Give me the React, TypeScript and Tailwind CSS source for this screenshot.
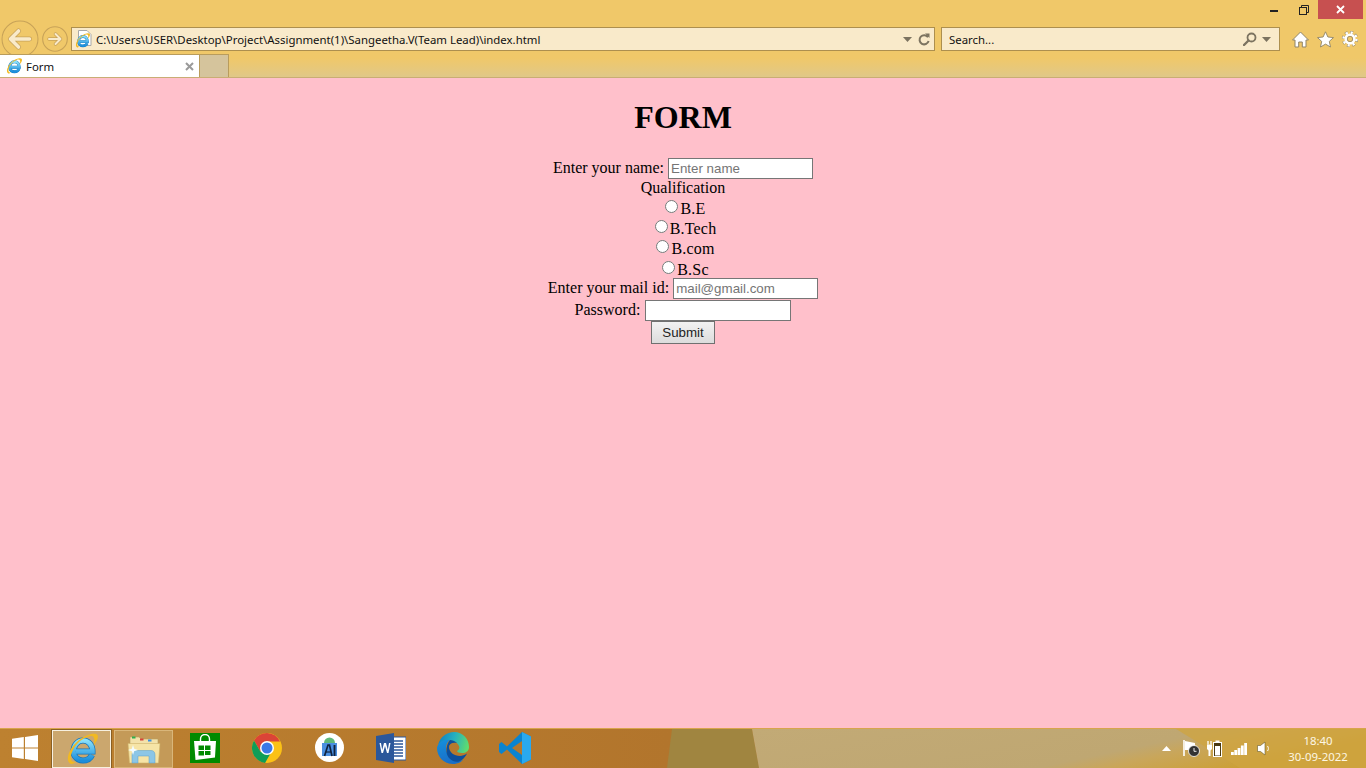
import React from "react";

const IeIcon = ({ size, x, y }: { size: number; x?: number; y?: number }) => (
  <svg width={size} height={size} x={x} y={y} viewBox="0 0 32 32">
    <defs>
      <linearGradient id={`ieb${size}`} x1="0" y1="0" x2="0" y2="1">
        <stop offset="0" stopColor="#8be0fa" />
        <stop offset="1" stopColor="#1b8edb" />
      </linearGradient>
    </defs>
    <path d="M10 18.500H26.500C26.500 12 22.500 7.500 17 7.500C11.500 7.500 7.500 12.500 7.500 18.500C7.500 24 12 27.500 17 27.500C21 27.500 24.500 25.500 26 22" fill="none" stroke="#1476bd" strokeWidth="6" />
    <path d="M10 18.500H26.500C26.500 12 22.500 7.500 17 7.500C11.500 7.500 7.500 12.500 7.500 18.500C7.500 24 12 27.500 17 27.500C21 27.500 24.500 25.500 26 22" fill="none" stroke={`url(#ieb${size})`} strokeWidth="4.600" />
    <path d="M4 30.500C-1 27 3 15 13 7C20 1.500 29 -1 31.500 2C33 4.500 30.500 9 27.500 12.500C28.500 8.500 29 5 27 3.500C23 1.500 13 7 8 15C4.500 21 3.500 26.500 6.500 28.500C8 29.200 9 29 10 28.500C8 30.800 5.500 31.500 4 30.500Z" fill="#f2b921" />
  </svg>
);

const NavCircle = ({ d, big }: { d: string; big?: boolean }) => (
  <svg width={big ? 38 : 26} height={big ? 38 : 26} viewBox="0 0 26 26">
    <circle cx="13" cy="13" r="12.300" fill="none" stroke="#c7a258" strokeWidth={big ? 0.7 : 1.1} />
    <path d={d} fill="none" stroke="#c7a258" strokeWidth={big ? 3.400 : 3.400} strokeLinecap="round" strokeLinejoin="round" />
    <path d={d} fill="none" stroke="#f9eaca" strokeWidth={big ? 2.400 : 2} strokeLinecap="round" strokeLinejoin="round" />
  </svg>
);

const SmallCaret = () => (
  <svg width="9" height="5" viewBox="0 0 9 5"><path d="M0 0h9L4.500 5z" fill="#7c7360" /></svg>
);

const AddressBar = () => (
  <div className="flex h-[24px] w-[864px] items-center border border-[#ad8f4e] bg-[#f9eaca] pr-[4px]">
    <svg width="17" height="18" viewBox="0 0 17 18" className="ml-[3px] shrink-0">
      <path d="M3.500 0.500h8.500l4 4v11h-12.500z" fill="#fff" stroke="#a8a8a8" />
      <IeIcon size={15} x={0} y={3} />
    </svg>
    <span className="ml-[4px] whitespace-nowrap pt-[2px] text-[11.400px] text-[#111]">
      C:\Users\USER\Desktop\Project\Assignment(1)\Sangeetha.V(Team Lead)\index.html
    </span>
    <div className="ml-auto flex items-center gap-[6px]">
      <SmallCaret />
      <svg width="12" height="13" viewBox="0 0 12 13">
        <path d="M10 4.200A4.600 4.600 0 1 0 10.600 8" fill="none" stroke="#7c7360" strokeWidth="2" />
        <path d="M7 0.500h4.500V5z" fill="#7c7360" />
      </svg>
    </div>
  </div>
);

const SearchBar = () => (
  <div className="ml-[6px] flex h-[24px] w-[339px] items-center border border-[#ad8f4e] bg-[#f9eaca] pl-[7px] pr-[8px]">
    <span className="pt-[2px] text-[11.400px] text-[#111]">Search...</span>
    <div className="ml-auto flex items-center gap-[5px]">
      <svg width="14" height="14" viewBox="0 0 14 14">
        <circle cx="8.500" cy="5.500" r="4" fill="none" stroke="#7c7360" strokeWidth="1.800" />
        <path d="M5.500 8.500L1 13" stroke="#7c7360" strokeWidth="2.400" strokeLinecap="round" />
      </svg>
      <SmallCaret />
    </div>
  </div>
);

const ChromeIcons = () => (
  <div className="ml-auto flex items-center gap-[8px] pr-[8px]">
    <svg width="17" height="17" viewBox="0 0 17 17">
      <path d="M8.500 1L16.500 9h-2.500V16H10.300v-5H6.700v5H3V9H0.500z" fill="#fff" stroke="#8f8468" strokeWidth="1" strokeLinejoin="round" />
    </svg>
    <svg width="17" height="17" viewBox="0 0 17 17">
      <path d="M8.500 0.800l2.400 5.200 5.600.6-4.200 3.800 1.200 5.600-5-2.900-5 2.900 1.200-5.600L0.500 6.600l5.600-.6z" fill="#fff" stroke="#8f8468" strokeWidth="0.900" strokeLinejoin="round" />
    </svg>
    <svg width="16" height="16" viewBox="0 0 16 16">
      <circle cx="8" cy="8" r="6.700" fill="none" stroke="#8f8468" strokeWidth="3" strokeDasharray="2.800 2.460" />
      <circle cx="8" cy="8" r="6.500" fill="none" stroke="#fff" strokeWidth="2.400" strokeDasharray="2.200 2.880" />
      <circle cx="8" cy="8" r="4.300" fill="none" stroke="#fff" strokeWidth="2.600" />
      <circle cx="8" cy="8" r="2.700" fill="none" stroke="#8f8468" strokeWidth="0.800" />
    </svg>
  </div>
);

const BrowserChrome = () => (
  <div className="h-[78px] border-b border-[#c9ad74] bg-[linear-gradient(#f0c869_0,#f0c869_58px,#e0c888_77px)]">
    <div className="flex h-[27px] items-start justify-end pr-[3px]">
      <div className="mb-[6px] mr-[21px] mt-[10px] h-[2px] w-[8px] bg-[#222]" />
      <svg width="10" height="10" viewBox="0 0 10 10" className="mr-[9px] mt-[5px]">
        <rect x="0.500" y="2.500" width="7" height="7" fill="none" stroke="#222" />
        <path d="M2.500 2.500V0.500H9.500V7.500H7.500" fill="none" stroke="#222" />
      </svg>
      <div className="flex h-[19px] w-[45px] items-center justify-center bg-[#c75050]">
        <svg width="9" height="9" viewBox="0 0 9 9">
          <path d="M1 1L8 8M8 1L1 8" stroke="#fff" strokeWidth="1.800" />
        </svg>
      </div>
    </div>
    <div className="flex h-[24px] items-center">
      <div className="ml-[1px] flex w-[70px] items-center">
        <NavCircle big d="M19.500 13H7.500M12 7.500L6.500 13L12 18.500" />
        <span className="ml-[3px]">
          <NavCircle d="M7 13H18M13.500 8L18.500 13L13.500 18" />
        </span>
      </div>
      <AddressBar />
      <SearchBar />
      <ChromeIcons />
    </div>
    <div className="mt-[3px] flex h-[23px] items-stretch">
      <div className="flex w-[200px] items-center border-r border-t border-[#b99c5c] bg-white pl-[6px] pr-[5px]">
        <IeIcon size={16} />
        <span className="ml-[4px] pt-[2px] text-[11.400px] text-[#111]">Form</span>
        <svg width="9" height="9" viewBox="0 0 9 9" className="ml-auto">
          <path d="M1 1L8 8M8 1L1 8" stroke="#9a9a9a" strokeWidth="2" />
        </svg>
      </div>
      <div className="w-[29px] border-r border-t border-[#b99c5c] bg-[#d5c49c]" />
    </div>
  </div>
);

const RadioRow = ({ label }: { label: string }) => (
  <label className="ml-[5px] flex h-[20px] items-center justify-center pt-[2px] tracking-[0.2px]">
    <input type="radio" name="qualification" className="mb-[5px] mr-[2px] h-[13px] w-[13px]" />
    {label}
  </label>
);

const textInput =
  "h-[21px] border border-[#767676] bg-white px-[2px] font-['Liberation_Sans',Arial,sans-serif] text-[13.330px] text-black outline-none placeholder:text-[#757575]";

const Form = () => (
  <main className="flex-1 bg-[#ffc0cb] font-['Liberation_Serif','Times_New_Roman',serif] text-[16px] text-black">
    <h1 className="mt-[21px] h-[37px] text-center text-[32px] font-bold leading-[37px]">FORM</h1>
    <form className="mt-[22px] flex flex-col">
      <label className="flex h-[20px] items-center justify-center gap-[4px]">
        Enter your name:
        <input type="text" placeholder="Enter name" className={`${textInput} w-[145px]`} />
      </label>
      <div className="h-[20px] text-center leading-[20px]">Qualification</div>
      <RadioRow label="B.E" />
      <RadioRow label="B.Tech" />
      <RadioRow label="B.com" />
      <div className="pt-px">
        <RadioRow label="B.Sc" />
      </div>
      <label className="-mt-px flex h-[21px] items-center justify-center gap-[4px]">
        <span className="mb-[2px]">Enter your mail id:</span>
        <input type="text" placeholder="mail@gmail.com" className={`${textInput} w-[145px]`} />
      </label>
      <label className="mt-[1px] flex h-[21px] items-center justify-center gap-[5px]">
        <span className="mb-[2px]">Password:</span>
        <input type="password" className={`${textInput} w-[146px]`} />
      </label>
      <div className="flex justify-center">
        <button
          type="button"
          className="h-[23px] w-[64px] border border-[#707070] bg-[linear-gradient(#f2f2f2,#dcdcdc)] font-['Liberation_Sans',Arial,sans-serif] text-[13.330px] leading-none text-[#222]"
        >
          Submit
        </button>
      </div>
    </form>
  </main>
);

const TaskbarWallpaper = () => (
  <svg className="absolute inset-0 h-full w-full" viewBox="0 0 1366 40" preserveAspectRatio="none">
    <defs>
      <linearGradient id="tb" x1="0" x2="1" y1="0" y2="0">
        <stop offset="0" stopColor="#bd8130" />
        <stop offset="0.49" stopColor="#b2752c" />
        <stop offset="1" stopColor="#b2752c" />
      </linearGradient>
      <linearGradient id="tbr" x1="0" x2="1" y1="0" y2="0.300">
        <stop offset="0" stopColor="#c2aa76" />
        <stop offset="0.7" stopColor="#bfa772" />
        <stop offset="0.8" stopColor="#c9a65a" />
        <stop offset="1" stopColor="#cca036" />
      </linearGradient>
    </defs>
    <rect width="1366" height="40" fill="url(#tb)" />
    <path d="M672 0H752L759 40H667Z" fill="#a08540" />
    <path d="M752 0H1366V40H759Z" fill="url(#tbr)" />
    <path d="M1176 0H1366V40H1240Z" fill="#cfa440" opacity="0.750" />
  </svg>
);

const WindowsLogo = () => (
  <svg width="26" height="26" viewBox="0 0 26 26">
    <path d="M0 3.800L11.800 2.100V12.400H0ZM13 1.900L26 0V12.400H13ZM0 13.600H11.800V23.900L0 22.200ZM13 13.600H26V26L13 24.100Z" fill="#fff" />
  </svg>
);

const FolderIcon = () => (
  <svg width="34" height="30" viewBox="0 0 34 30">
    <path d="M3 3h9l2 2h17v8H3z" fill="#f3e2aa" stroke="#b9a060" strokeWidth="0.600" />
    <rect x="5" y="2.500" width="3.500" height="2" fill="#2fae4e" />
    <rect x="13" y="4.500" width="3.500" height="2" fill="#d8443a" />
    <rect x="21" y="5.500" width="3.500" height="2" fill="#3b8fe0" />
    <path d="M1 9.500h32l-1.500 19.500H2.500z" fill="#f6e4a6" stroke="#cdb26a" strokeWidth="0.600" />
    <path d="M5 29v-8c0-3 1.500-4.500 4-4.500h15c2.500 0 4 1.500 4 4.500v8h-6v-7h-11v7z" fill="#8cc6e6" stroke="#5b9fc8" strokeWidth="0.500" />
    <path d="M6 11l1.200 3.800 3.800 1.200-3.800 1.200L6 21l-1.200-3.800L1 16l3.800-1.200z" fill="#f3fcff" />
  </svg>
);

const StoreIcon = () => (
  <div className="flex h-[30px] w-[30px] items-center justify-center bg-[#008a00]">
    <svg width="24" height="27" viewBox="0 0 24 27">
      <path d="M7.500 7V5a4.500 4.500 0 0 1 9 0V7" fill="none" stroke="#fff" strokeWidth="1.400" />
      <path d="M1 7H23L22 23.500L2.500 26Z" fill="#fff" />
      <path d="M5.500 11.500h5.500v4.500H5.500zM12 11.500h5.500v4.500H12zM5.500 17h5.500v4.500H5.500zM12 17h5.500v4H12z" fill="#008a00" />
    </svg>
  </div>
);

const ChromeLogo = () => (
  <svg width="30" height="30" viewBox="0 0 30 30">
    <circle cx="15" cy="15" r="15" fill="#fbc116" />
    <path d="M15 0A15 15 0 0 0 2 7.500L8.500 18.800 15 8.500H28A15 15 0 0 0 15 0Z" fill="#db4437" />
    <path d="M2 7.500A15 15 0 0 0 13 29.900L19.500 18.800H8.500Z" fill="#0f9d58" />
    <circle cx="15" cy="15" r="7" fill="#fff" />
    <circle cx="15" cy="15" r="5.500" fill="#3b78e7" />
  </svg>
);

const StudioIcon = () => (
  <svg width="29" height="29" viewBox="0 0 29 29">
    <circle cx="14.500" cy="14.500" r="14.500" fill="#fff" />
    <path d="M9 10a5.500 5.500 0 0 1 11 0z" fill="#5fb87a" />
    <path d="M7 10H22V23H7z" fill="#4a8fe0" />
    <path d="M9.500 23L13 12H14.500L17 23" fill="none" stroke="#10233f" strokeWidth="1.700" />
    <path d="M19.500 12V23" stroke="#10233f" strokeWidth="1.900" />
    <path d="M11 19H16" stroke="#10233f" strokeWidth="1.200" />
  </svg>
);

const WordIcon = () => (
  <svg width="30" height="30" viewBox="0 0 30 30">
    <path d="M14 4H30V27H14Z" fill="#fff" stroke="#2b579a" />
    <path d="M17 8H27M17 11H27M17 14H27M17 17H27M17 20H27M17 23H27" stroke="#2b579a" strokeWidth="1.300" />
    <path d="M0 3L18 0V30L0 27Z" fill="#2b579a" />
    <path d="M3.500 10L5.500 20H7L9 13L11 20H12.500L14.500 10H13L11.800 17L10 10H8L6.200 17L5 10Z" fill="#fff" />
  </svg>
);

const EdgeIcon = () => (
  <svg width="32" height="32" viewBox="0 0 32 32">
    <defs>
      <linearGradient id="edgeTop" x1="0" y1="0.300" x2="1" y2="0.500">
        <stop offset="0" stopColor="#0f7fc4" />
        <stop offset="0.5" stopColor="#25b0c0" />
        <stop offset="1" stopColor="#5fdc6e" />
      </linearGradient>
      <linearGradient id="edgeLeft" x1="0" y1="0" x2="0.300" y2="1">
        <stop offset="0" stopColor="#1490dc" />
        <stop offset="1" stopColor="#1a6fc8" />
      </linearGradient>
    </defs>
    <path d="M1 13C3 5 10 0 17 0C26 0 32 7 32 15C32 19 29 21 25 21C22 21 20 20 20 19C22 18 23 16 22 14C20 9 12 7 7 9C4 10 2 11 1 13Z" fill="url(#edgeTop)" />
    <path d="M1 13C3 9 8 7 13 8C9 11 8 16 10 21C12 27 19 30 26 28C23 31 19 32 16 32C7 32 0 25 0 16C0 15 0.500 14 1 13Z" fill="url(#edgeLeft)" />
    <path d="M13 8C15 8 18 9 20 11C15 10 12 12 12 15C12 20 17 24 23 24C25 24 28 23 30 21.500C28.500 25 25 28.500 22 29.500C16 31 10 26 9.500 20C9.200 15 10.500 11 13 8Z" fill="#0c4f9c" />
  </svg>
);

const VsCodeIcon = () => (
  <svg width="32" height="32" viewBox="0 0 32 32">
    <path d="M23 0L32 4.500V27.500L23 32L8 17.500L2.500 22L0 20V12L2.500 10L8 14.500ZM23 9L13 16L23 23Z" fill="#0a84d0" fillRule="evenodd" />
    <path d="M23 0L32 4.500V27.500L23 32Z" fill="#29a9ef" />
  </svg>
);

const Tray = () => (
  <div className="relative ml-auto flex h-full items-center pr-[18px]">
    <svg width="9" height="5" viewBox="0 0 9 5" className="mr-[12px]"><path d="M0 5L4.500 0L9 5Z" fill="#fff" /></svg>
    <svg width="17" height="17" viewBox="0 0 17 17" className="mr-[7px]">
      <path d="M1 0V16" stroke="#fff" strokeWidth="1.600" />
      <path d="M2 1L12 3V10H2Z" fill="#fff" />
      <circle cx="11" cy="11" r="5.500" fill="#333" stroke="#fff" strokeWidth="0.800" />
      <path d="M11 8V11.300H13.500" stroke="#fff" strokeWidth="0.900" fill="none" />
    </svg>
    <svg width="15" height="17" viewBox="0 0 15 17" className="mr-[9px]">
      <path d="M1 1V4.500M4 1V4.500" stroke="#fff" strokeWidth="1.300" />
      <path d="M0 4.500H5V9L3.500 10.500V16H1.500V10.500L0 9Z" fill="#fff" />
      <rect x="6.500" y="2.500" width="8" height="14" fill="#4a3a12" stroke="#fff" strokeWidth="1" />
      <rect x="8.500" y="0.500" width="4" height="2" fill="#fff" />
      <rect x="8" y="6" width="5" height="9.500" fill="#fff" />
    </svg>
    <svg width="16" height="12" viewBox="0 0 16 12" className="mr-[10px]">
      <path d="M0 9h2.800v3H0zM3.300 7h2.800v5H3.300zM6.600 5h2.800v7H6.600zM9.900 2.500h2.800v9.500H9.900zM13.200 0h2.800v12h-2.800z" fill="#fff" />
    </svg>
    <svg width="13" height="15" viewBox="0 0 13 15" className="mr-[18px]">
      <path d="M0.500 4.500H3.500L8 1V14L3.500 10.500H0.500Z" fill="#fff" stroke="#6a5a28" strokeWidth="0.600" />
      <path d="M10.500 5C11.700 6.500 11.700 8.500 10.500 10" fill="none" stroke="#fff" strokeWidth="1" />
    </svg>
    <div className="flex w-[60px] flex-col items-center text-[11.400px] leading-[16px] text-[#fdf6e3]">
      <span>18:40</span>
      <span>30-09-2022</span>
    </div>
  </div>
);

const Taskbar = () => (
  <footer className="relative flex h-[40px] items-center border-t border-[#d8a44c]">
    <TaskbarWallpaper />
    <div className="relative mb-[2px] ml-[12px]"><WindowsLogo /></div>
    <div className="relative ml-[14px] flex h-[38px] w-[59px] items-center justify-center border border-[#f7f0e0] bg-[#cba76e] shadow-[0_0_0_1px_#8a6024]">
      <IeIcon size={32} />
    </div>
    <div className="relative ml-[3px] flex h-[38px] w-[59px] items-center justify-center border border-[#d9b67a] bg-[#c49a58]">
      <FolderIcon />
    </div>
    <div className="relative mb-[2px] ml-[17px]"><StoreIcon /></div>
    <div className="relative mb-[2px] ml-[32px]"><ChromeLogo /></div>
    <div className="relative mb-[2px] ml-[33px]"><StudioIcon /></div>
    <div className="relative mb-[2px] ml-[32px]"><WordIcon /></div>
    <div className="relative mb-[2px] ml-[31px]"><EdgeIcon /></div>
    <div className="relative mb-[2px] ml-[30px]"><VsCodeIcon /></div>
    <Tray />
  </footer>
);

export default function App() {
  return (
    <div className="flex h-[768px] flex-col overflow-hidden font-['Noto_Sans','Open_Sans',sans-serif]">
      <BrowserChrome />
      <Form />
      <Taskbar />
    </div>
  );
}
